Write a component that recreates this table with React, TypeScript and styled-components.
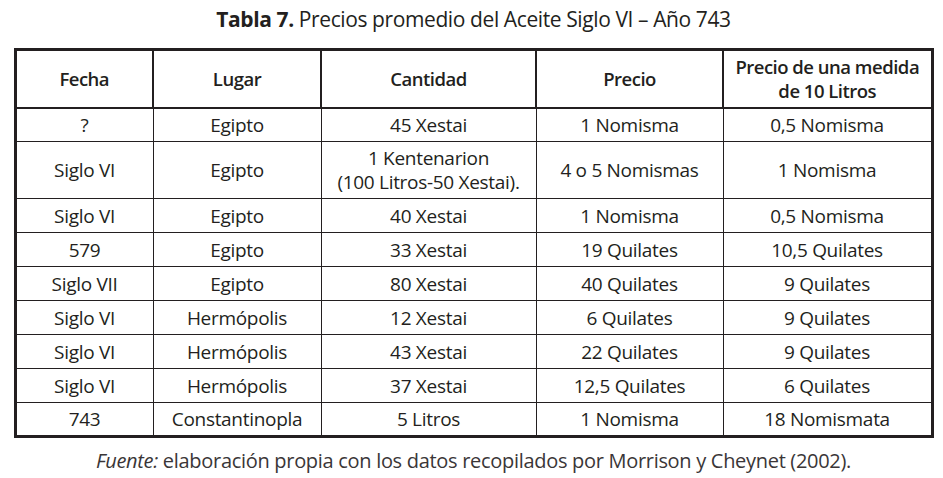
import React from "react";
import styled, { createGlobalStyle } from "styled-components";

const GlobalStyle = createGlobalStyle`
  html, body {
    margin: 0;
    padding: 0;
    background: #ffffff;
  }
  body {
    font-family: "Open Sans", "Noto Sans", "Liberation Sans", sans-serif;
    color: #231f20;
  }
`;

const Page = styled.div`
  width: 943px;
  height: 478px;
  display: flex;
  flex-direction: column;
  align-items: center;
  padding: 4px 0 0 4px;
  box-sizing: border-box;
`;

const Title = styled.div`
  font-size: 21px;
  line-height: 30px;
  letter-spacing: -0.4px;
  margin-bottom: 14px;
  b {
    font-weight: 700;
  }
`;

const Table = styled.table`
  width: 917px;
  border-collapse: collapse;
  border: 3px solid #231f20;
  table-layout: fixed;
`;

const Col = styled.col<{ $w: number }>`
  width: ${(p) => p.$w}px;
`;

const HeadCell = styled.th`
  height: 58px;
  padding: 0 2px;
  border: 2.5px solid #231f20;
  font-size: 18.5px;
  font-weight: 600;
  line-height: 24px;
  letter-spacing: -0.5px;
  text-align: center;
  vertical-align: middle;
  box-sizing: border-box;
`;

const Row = styled.tr<{ $tall?: boolean }>`
  height: ${(p) => (p.$tall ? 57 : 34)}px;
`;

const Cell = styled.td`
  padding: 0 2px;
  border: 1px solid #231f20;
  font-size: 19px;
  line-height: 24px;
  letter-spacing: -0.3px;
  text-align: center;
  vertical-align: middle;
  box-sizing: border-box;
`;

const Footer = styled.div`
  margin-top: 10px;
  font-size: 20px;
  line-height: 26px;
  letter-spacing: -0.3px;
  color: #3a3637;
  i {
    font-style: italic;
  }
`;

const columns: [string, number][] = [
  ["Fecha", 138],
  ["Lugar", 168],
  ["Cantidad", 215],
  ["Precio", 187],
  ["Precio de una medida de 10 Litros", 209],
];

const rows: string[][] = [
  ["?", "Egipto", "45 Xestai", "1 Nomisma", "0,5 Nomisma"],
  ["Siglo VI", "Egipto", "1 Kentenarion\n(100 Litros-50 Xestai).", "4 o 5 Nomismas", "1 Nomisma"],
  ["Siglo VI", "Egipto", "40 Xestai", "1 Nomisma", "0,5 Nomisma"],
  ["579", "Egipto", "33 Xestai", "19 Quilates", "10,5 Quilates"],
  ["Siglo VII", "Egipto", "80 Xestai", "40 Quilates", "9 Quilates"],
  ["Siglo VI", "Hermópolis", "12 Xestai", "6 Quilates", "9 Quilates"],
  ["Siglo VI", "Hermópolis", "43 Xestai", "22 Quilates", "9 Quilates"],
  ["Siglo VI", "Hermópolis", "37 Xestai", "12,5 Quilates", "6 Quilates"],
  ["743", "Constantinopla", "5 Litros", "1 Nomisma", "18 Nomismata"],
];

function lines(text: string) {
  return text.split("\n").map((line, k) => (
    <React.Fragment key={k}>
      {k > 0 && <br />}
      {line}
    </React.Fragment>
  ));
}

export default function App() {
  return (
    <>
      <GlobalStyle />
      <Page>
        <Title>
          <b>Tabla 7.</b> Precios promedio del Aceite Siglo VI – Año 743
        </Title>
        <Table>
          <colgroup>
            {columns.map(([label, w]) => (
              <Col key={label} $w={w} />
            ))}
          </colgroup>
          <thead>
            <tr>
              <HeadCell>Fecha</HeadCell>
              <HeadCell>Lugar</HeadCell>
              <HeadCell>Cantidad</HeadCell>
              <HeadCell>Precio</HeadCell>
              <HeadCell>{lines("Precio de una medida\nde 10 Litros")}</HeadCell>
            </tr>
          </thead>
          <tbody>
            {rows.map((r, i) => (
              <Row key={i} $tall={r[2].includes("\n")}>
                {r.map((c, j) => (
                  <Cell key={j}>{lines(c)}</Cell>
                ))}
              </Row>
            ))}
          </tbody>
        </Table>
        <Footer>
          <i>Fuente:</i> elaboración propia con los datos recopilados por Morrison y Cheynet (2002).
        </Footer>
      </Page>
    </>
  );
}
